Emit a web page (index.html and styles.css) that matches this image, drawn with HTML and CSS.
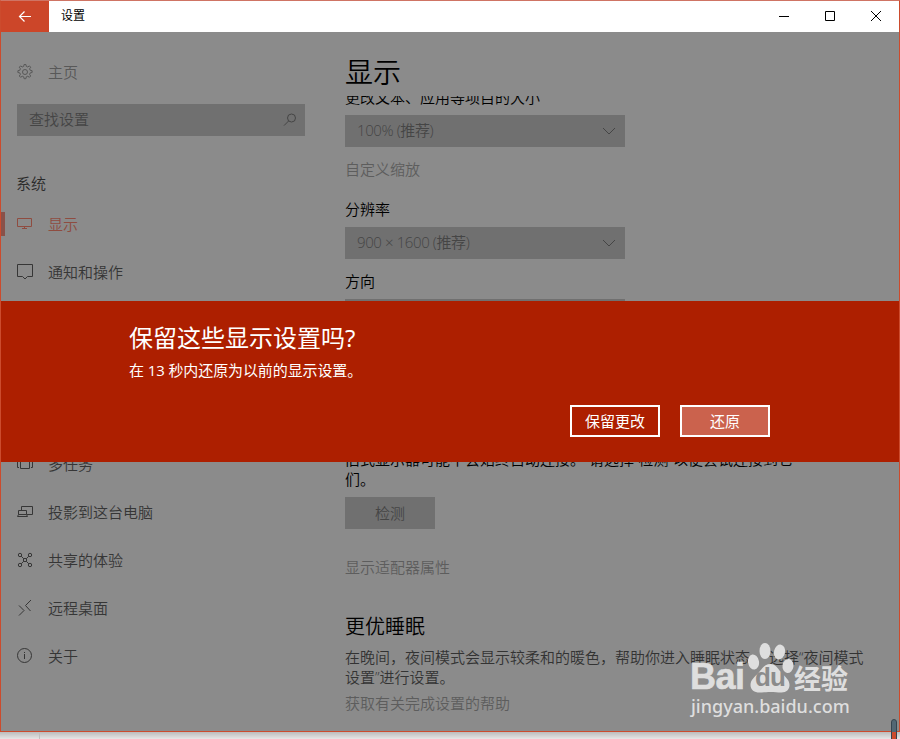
FILE: index.html
```html
<!DOCTYPE html>
<html lang="zh-CN">
<head>
    <meta charset="UTF-8">
    <meta name="viewport" content="width=device-width, initial-scale=1.0">
    <title>设置</title>
    <link rel="stylesheet" href="styles.css">
</head>
<body>
<div class="window">
    <header class="titlebar">
        <button class="back-button" aria-label="返回">
            <svg width="14" height="12" viewBox="0 0 14 12"><path d="M13 5.500H1.500M6.500.5l-5 5 5 5"/></svg>
        </button>
        <span class="window-title">设置</span>
        <div class="window-controls">
            <svg width="46" height="31" viewBox="0 0 46 31"><path d="M18 15.500h10"/></svg>
            <svg width="46" height="31" viewBox="0 0 46 31"><path d="M18.500 10.500h9v9h-9z"/></svg>
            <svg width="46" height="31" viewBox="0 0 46 31"><path d="M18 10l10 10M28 10l-10 10"/></svg>
        </div>
    </header>

    <div class="content">
        <nav class="sidebar">
            <a class="home">
                <svg class="icon" viewBox="0 0 16 16"><circle cx="8" cy="8" r="2.500"/><path d="M6.700 2.400L7.100.5h1.800l.4 1.900 1.500.6 1.600-1.100 1.300 1.300-1.100 1.600.6 1.500 1.900.4v1.800l-1.900.4-.6 1.500 1.100 1.600-1.300 1.300-1.600-1.100-1.500.6-.4 1.900H7.100l-.4-1.900-1.500-.6-1.600 1.100-1.300-1.300 1.100-1.600-.6-1.500-1.900-.4V6.700l1.900-.4.6-1.500-1.100-1.600 1.300-1.300L5.200 3z"/></svg>
                <span>主页</span>
            </a>
            <div class="search">
                <span>查找设置</span>
                <svg width="14" height="14" viewBox="0 0 14 14"><circle cx="8.500" cy="5" r="4"/><path d="M5.700 7.900L1 12.600"/></svg>
            </div>
            <h2 class="group-title">系统</h2>
            <ul class="menu">
                <li class="active">
                    <svg class="icon" viewBox="0 0 16 16"><path d="M.5 2.500h14v8H.5zM7.500 10.500v2M5 12.500h5"/></svg>
                    <span>显示</span>
                </li>
                <li>
                    <svg class="icon" viewBox="0 0 16 16"><path d="M.5.5h15v12h-5L8 15l-2.500-2.500h-5z"/></svg>
                    <span>通知和操作</span>
                </li>
                <li>
                    <svg class="icon" viewBox="0 0 16 16"><path d="M8 1v7M4.500 3a6 6 0 1 0 7 0"/></svg>
                    <span>电源和睡眠</span>
                </li>
                <li>
                    <svg class="icon" viewBox="0 0 16 16"><path d="M.5 5.500h15v5H.5zM11 8h2"/></svg>
                    <span>存储</span>
                </li>
                <li>
                    <svg class="icon" viewBox="0 0 16 16"><path d="M.5 2.500h15v11H.5zM6 11.500h4"/></svg>
                    <span>平板模式</span>
                </li>
                <li>
                    <svg class="icon" viewBox="0 0 16 16"><path d="M3.500 2.500h9v10h-9zM2 4.500H.5v7H2M14 4.500h1.500v7H14"/></svg>
                    <span>多任务</span>
                </li>
                <li>
                    <svg class="icon" viewBox="0 0 16 16"><path d="M4.500 6.500v-4h11v8h-5.500M1.500 6.500h8v4h-8zM1.500 10.500l-1 2h10l-1-2"/></svg>
                    <span>投影到这台电脑</span>
                </li>
                <li>
                    <svg class="icon" viewBox="0 0 16 16"><circle cx="3" cy="3" r="1.700"/><circle cx="13" cy="3" r="1.700"/><circle cx="3" cy="13" r="1.700"/><circle cx="13" cy="13" r="1.700"/><path d="M6.500 6.500h3v3h-3zM4.200 4.200l2.300 2.300M11.800 4.200L9.500 6.500M4.200 11.800l2.300-2.300M11.800 11.800L9.500 9.500"/></svg>
                    <span>共享的体验</span>
                </li>
                <li>
                    <svg class="icon" viewBox="0 0 16 16"><path d="M2 5.500l5 5L2 15.500M14 0L8.500 5.500l5 5.500"/></svg>
                    <span>远程桌面</span>
                </li>
                <li>
                    <svg class="icon" viewBox="0 0 16 16"><circle cx="7.500" cy="7.500" r="7"/><path d="M7.500 6v5M7.500 4v1"/></svg>
                    <span>关于</span>
                </li>
            </ul>
        </nav>

        <main class="page">
            <h1>显示</h1>
            <div class="scroll-area">
                <p class="label first">更改文本、应用等项目的大小</p>
                <div class="select">
                    <span>100% (推荐)</span>
                    <svg width="14" height="8" viewBox="0 0 14 8"><path d="M1 1l6 6 6-6"/></svg>
                </div>
                <a class="link scale-link">自定义缩放</a>
                <p class="label">分辨率</p>
                <div class="select">
                    <span>900 × 1600 (推荐)</span>
                    <svg width="14" height="8" viewBox="0 0 14 8"><path d="M1 1l6 6 6-6"/></svg>
                </div>
                <p class="label orientation">方向</p>
                <div class="select">
                    <span>纵向</span>
                    <svg width="14" height="8" viewBox="0 0 14 8"><path d="M1 1l6 6 6-6"/></svg>
                </div>
                <h3 class="displays-title">多显示器</h3>
                <p class="displays-text">旧式显示器可能不会始终自动连接。 请选择“检测”以便尝试连接到它们。</p>
                <button class="detect-button">检测</button>
                <a class="link adapter-link">显示适配器属性</a>
                <h3>更优睡眠</h3>
                <p class="description">在晚间，夜间模式会显示较柔和的暖色，帮助你进入睡眠状态。 选择“夜间模式<br>设置”进行设置。</p>
                <a class="link help-link">获取有关完成设置的帮助</a>
            </div>
        </main>
    </div>

    <!-- Confirmation bar over the page -->
    <section class="dialog">
        <h2>保留这些显示设置吗?</h2>
        <p>在 13 秒内还原为以前的显示设置。</p>
        <div class="dialog-buttons">
            <button>保留更改</button>
            <button class="default">还原</button>
        </div>
    </section>
</div>

<div class="desktop-strip">
    <div class="desktop-pane"></div>
</div>
<div class="scroll-handle"></div>

<div class="watermark">
    <div class="brand">
        <span class="bai">Bai</span>
        <span class="paw">
            <svg width="48" height="52" viewBox="0 0 48 52">
                <ellipse cx="6.500" cy="19" rx="5.500" ry="7.500" transform="rotate(-10 6.500 19)"/>
                <ellipse cx="18" cy="8" rx="5.500" ry="8"/>
                <ellipse cx="32.500" cy="9" rx="5.500" ry="7.500" transform="rotate(12 32.500 9)"/>
                <ellipse cx="41" cy="23" rx="5.500" ry="7" transform="rotate(8 41 23)"/>
                <path d="M23.500 21c-6 0-9 5-12 9-4 4-8 7-8 12 0 5 4 7.500 9 7.500 4 0 7-.5 11-.5s7 .5 11 .5c5 0 8-3 8-7.500 0-5-4-8-8-12-3-4-6-9-11-9z"/>
            </svg>
            <span class="du">du</span>
        </span>
        <span class="jingyan">经验</span>
    </div>
    <div class="site">jingyan.baidu.com</div>
</div>
</body>
</html>
```

FILE: styles.css
```css
* {
    box-sizing: border-box;
}
body {
    margin: 0;
    width: 900px;
    height: 739px;
    overflow: hidden;
    position: relative;
    background-color: #e4e4e4;
    font-family: "Open Sans", "Noto Sans CJK SC", sans-serif;
    font-size: 15px;
    font-weight: 350;
    line-height: 20px;
    color: #000;
}
h1, h2, h3, p, ul {
    margin: 0;
    padding: 0;
    font-weight: 350;
}
button {
    font: inherit;
    padding: 0;
}
svg {
    fill: none;
    stroke: currentColor;
    stroke-width: 1;
    flex: none;
}
.window {
    position: relative;
    width: 900px;
    height: 732px;
    border: 1px solid #cc4b2d;
    border-top-color: #cf7464;
    background-color: #8b8b8b;
}
.titlebar {
    display: flex;
    align-items: center;
    height: 31px;
    background-color: #fff;
}
.back-button {
    width: 48px;
    height: 31px;
    border: none;
    background-color: #cc4629;
    color: #fff;
    display: flex;
    align-items: center;
    justify-content: center;
}
.back-button svg {
    stroke-width: 1.2;
}
.window-title {
    margin-left: 12px;
    padding-bottom: 1px;
    font-size: 12px;
    font-weight: 400;
}
.window-controls {
    display: flex;
    margin-left: auto;
}
.content {
    display: flex;
    height: 699px;
    overflow: hidden;
}

/* Left column */
.sidebar {
    width: 320px;
    color: #363636;
}
.home, .menu li {
    display: flex;
    align-items: center;
    height: 48px;
    padding-left: 16px;
}
.home {
    margin-top: 16px;
    color: #585858;
}
.icon {
    width: 16px;
    height: 16px;
    margin-right: 15px;
}
.search {
    display: flex;
    align-items: center;
    justify-content: space-between;
    width: 288px;
    height: 32px;
    margin: 8px 0 0 16px;
    padding: 0 8px 0 12px;
    background-color: #707070;
    color: #454545;
}
.search span, .select span {
    padding-bottom: 2px;
}
.group-title {
    margin: 37px 0 7px 15px;
    font-size: 15px;
    color: #2a2a2a;
}
.menu {
    list-style: none;
}
.menu .active {
    padding-left: 0;
    color: #8f4c40;
}
.menu .active::before {
    content: "";
    width: 4px;
    height: 24px;
    margin-right: 12px;
    background-color: #8a5149;
}

/* Right column */
.page {
    width: 578px;
    padding-left: 24px;
}
h1 {
    padding-top: 20px;
    height: 64px;
    font-size: 28px;
    line-height: 40px;
}
.scroll-area {
    height: 635px;
    overflow: hidden;
}
.first {
    margin-top: -9px;
}
.select {
    display: flex;
    align-items: center;
    justify-content: space-between;
    width: 280px;
    height: 32px;
    margin-top: 8px;
    padding: 0 9px 0 12px;
    background-color: #707070;
    color: #454545;
    letter-spacing: -.4px;
}
.link {
    display: block;
    color: #5d5d5d;
}
.scale-link {
    margin: 12px 0 20px;
}
.orientation {
    margin-top: 12px;
}
h3 {
    font-size: 20px;
    line-height: 28px;
}
.displays-title {
    margin: 79px 0 11px;
}
.displays-text {
    width: 450px;
}
.detect-button {
    display: block;
    width: 90px;
    height: 32px;
    margin-top: 8px;
    border: none;
    background-color: #707070;
    color: #454545;
}
.adapter-link {
    margin: 28px 0 36px;
}
.description {
    margin-top: 6px;
    color: #333;
    white-space: nowrap;
}
.help-link {
    margin-top: 6px;
}

.dialog {
    position: absolute;
    top: 300px;
    left: 0;
    width: 898px;
    height: 161px;
    padding: 20px 129px 0 128px;
    background-color: #ad1f00;
    color: #fff;
    font-weight: 400;
}
.dialog h2 {
    font-size: 24px;
    font-weight: 400;
    line-height: 34px;
}
.dialog p {
    margin-top: 5px;
    font-weight: 400;
    letter-spacing: -.1px;
}
.dialog-buttons {
    display: flex;
    justify-content: flex-end;
    gap: 20px;
    margin-top: 25px;
}
.dialog-buttons button {
    width: 90px;
    height: 32px;
    border: 2px solid #fff;
    background-color: transparent;
    color: #fff;
}
.dialog-buttons .default {
    background-color: #cb624d;
}

.desktop-strip {
    height: 7px;
    background: linear-gradient(#bcbcbc, #e6e6e6);
}
.desktop-pane {
    width: 40px;
    height: 7px;
    border-right: 1px solid #c0c0c0;
}
.scroll-handle {
    position: absolute;
    left: 891px;
    top: 719px;
    width: 6px;
    height: 24px;
    border: 1px solid #35444e;
    border-radius: 3px;
    background: linear-gradient(#526773 12px, #cc4b2d 12px);
}

/* Watermark */
.watermark {
    position: absolute;
    left: 690px;
    top: 643px;
    width: 164px;
    color: #dedede;
}
.brand {
    display: flex;
    height: 52px;
    align-items: flex-end;
}
.bai {
    width: 57px;
    padding-bottom: 1px;
    font: bold 36px/34px "Liberation Sans", sans-serif;
    letter-spacing: -.5px;
    -webkit-text-stroke: .6px #dedede;
}
.paw {
    position: relative;
    width: 47px;
    height: 52px;
}
.paw svg {
    fill: #dedede;
    stroke: none;
}
.du {
    position: absolute;
    left: 8px;
    top: 20px;
    font: bold 26px/28px "Liberation Sans", sans-serif;
    letter-spacing: -1px;
    color: #8b8b8b;
}
.jingyan {
    font: bold 27px/34px "Noto Sans CJK SC", sans-serif;
}
.site {
    padding-left: 1px;
    font: 500 18px/22px "Noto Sans", sans-serif;
}
```
